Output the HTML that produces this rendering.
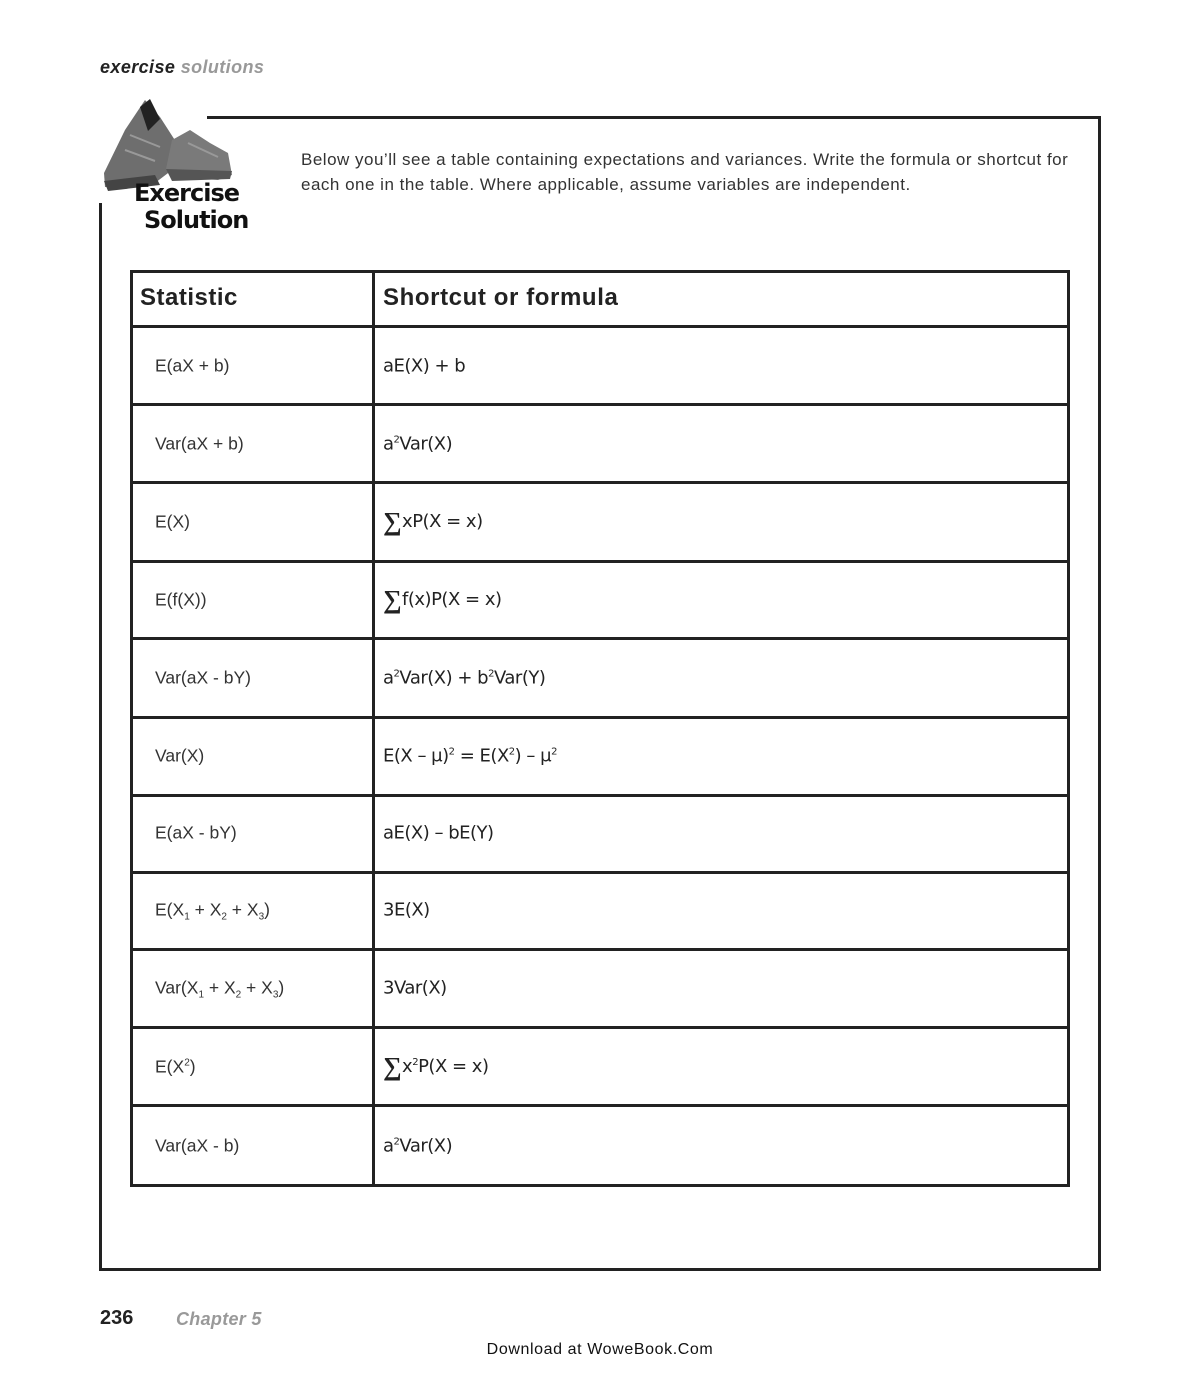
<!DOCTYPE html>
<html><head><meta charset="utf-8"><style>
body{margin:0;background:#fff;width:1200px;height:1387px;position:relative;overflow:hidden;font-family:"Liberation Sans",sans-serif;color:#222}
.a{position:absolute}
.hl{position:absolute;background:#222}
.l{position:absolute;left:155px;font-size:17.5px;color:#333;transform:translateY(-50%)}
.r{position:absolute;left:383px;font-family:"DejaVu Sans",sans-serif;font-size:18px;color:#222;transform:translateY(-50%);letter-spacing:-0.5px}
sub{font-size:10px;vertical-align:-4px}
sup{font-size:10px;vertical-align:7px;line-height:0}
.s{font-family:"Liberation Serif",serif;font-weight:bold;font-size:26px;vertical-align:-3px;margin-right:1px}
</style></head><body>
<div class="a" style="left:100px;top:57px;font-size:18px;font-weight:bold;font-style:italic;letter-spacing:0.4px"><span style="color:#222">exercise</span> <span style="color:#999">solutions</span></div>

<!-- frame -->
<div class="hl" style="left:207px;top:116px;width:894px;height:3px"></div>
<div class="hl" style="left:1098px;top:116px;width:3px;height:1155px"></div>
<div class="hl" style="left:99px;top:203px;width:3px;height:1068px"></div>
<div class="hl" style="left:99px;top:1268px;width:1002px;height:3px"></div>

<!-- shoes -->
<svg class="a" style="left:100px;top:95px" width="160" height="150" viewBox="0 0 160 150">
<path d="M25 35 L45 5 L60 22 L78 50 L72 75 L55 88 L20 92 L5 92 L4 78 Z" fill="#6e6e6e"/>
<path d="M40 12 L50 4 L60 24 L48 36 Z" fill="#222"/>
<path d="M72 45 L90 35 L110 48 L128 58 L132 80 L118 85 L80 82 L66 74 Z" fill="#7a7a7a"/>
<path d="M4 86 L55 80 L60 90 L8 96 Z" fill="#444"/>
<path d="M66 74 L132 76 L130 84 L72 86 Z" fill="#555"/>
<path d="M30 40 L60 52 M25 55 L55 66 M88 48 L118 62" stroke="#999" stroke-width="2"/>
</svg>
<div class="a" style="left:134px;top:180px;font-family:'DejaVu Sans',sans-serif;font-weight:bold;font-size:24px;line-height:27px;color:#111;letter-spacing:-1px">Exercise<br><span style="margin-left:10px">Solution</span></div>

<div class="a" style="left:301px;top:147px;font-size:17px;line-height:25px;color:#333;width:775px;letter-spacing:0.5px">Below you’ll see a table containing expectations and variances. Write the formula or shortcut for each one in the table. Where applicable, assume variables are independent.</div>

<!-- table -->
<div class="a" style="left:130px;top:270px;width:934px;height:911px;border:3px solid #222"></div>
<div class="hl" style="left:372px;top:270px;width:3px;height:917px"></div>
<div class="hl" style="left:130px;top:325px;width:940px;height:3px"></div>
<div class="hl" style="left:130px;top:403px;width:940px;height:3px"></div>
<div class="hl" style="left:130px;top:481px;width:940px;height:3px"></div>
<div class="hl" style="left:130px;top:560px;width:940px;height:3px"></div>
<div class="hl" style="left:130px;top:637px;width:940px;height:3px"></div>
<div class="hl" style="left:130px;top:716px;width:940px;height:3px"></div>
<div class="hl" style="left:130px;top:794px;width:940px;height:3px"></div>
<div class="hl" style="left:130px;top:871px;width:940px;height:3px"></div>
<div class="hl" style="left:130px;top:948px;width:940px;height:3px"></div>
<div class="hl" style="left:130px;top:1026px;width:940px;height:3px"></div>
<div class="hl" style="left:130px;top:1104px;width:940px;height:3px"></div>

<div class="a" style="left:140px;top:284px;font-size:24px;font-weight:bold;color:#222;letter-spacing:0.5px">Statistic</div>
<div class="a" style="left:383px;top:284px;font-size:24px;font-weight:bold;color:#222;letter-spacing:0.6px">Shortcut or formula</div>

<div class="l" style="top:366px">E(aX + b)</div><div class="r" style="top:366px">aE(X) + b</div>
<div class="l" style="top:444px">Var(aX + b)</div><div class="r" style="top:444px">a<sup>2</sup>Var(X)</div>
<div class="l" style="top:522px">E(X)</div><div class="r" style="top:522px"><span class="s">∑</span>xP(X = x)</div>
<div class="l" style="top:600px">E(f(X))</div><div class="r" style="top:600px"><span class="s">∑</span>f(x)P(X = x)</div>
<div class="l" style="top:678px">Var(aX - bY)</div><div class="r" style="top:678px">a<sup>2</sup>Var(X) + b<sup>2</sup>Var(Y)</div>
<div class="l" style="top:756px">Var(X)</div><div class="r" style="top:756px">E(X – μ)<sup>2</sup> = E(X<sup>2</sup>) – μ<sup>2</sup></div>
<div class="l" style="top:833px">E(aX - bY)</div><div class="r" style="top:833px">aE(X) – bE(Y)</div>
<div class="l" style="top:911px">E(X<sub>1</sub> + X<sub>2</sub> + X<sub>3</sub>)</div><div class="r" style="top:910px">3E(X)</div>
<div class="l" style="top:989px">Var(X<sub>1</sub> + X<sub>2</sub> + X<sub>3</sub>)</div><div class="r" style="top:988px">3Var(X)</div>
<div class="l" style="top:1067px">E(X<sup>2</sup>)</div><div class="r" style="top:1067px"><span class="s">∑</span>x<sup>2</sup>P(X = x)</div>
<div class="l" style="top:1146px">Var(aX - b)</div><div class="r" style="top:1146px">a<sup>2</sup>Var(X)</div>

<div class="a" style="left:100px;top:1307px;font-size:20px;font-weight:bold;color:#222">236</div>
<div class="a" style="left:176px;top:1309px;font-size:18px;font-weight:bold;font-style:italic;color:#999;letter-spacing:0.3px">Chapter 5</div>
<div class="a" style="left:0;width:1200px;text-align:center;top:1341px;font-size:16px;color:#111;letter-spacing:0.6px">Download at WoweBook.Com</div>
</body></html>
